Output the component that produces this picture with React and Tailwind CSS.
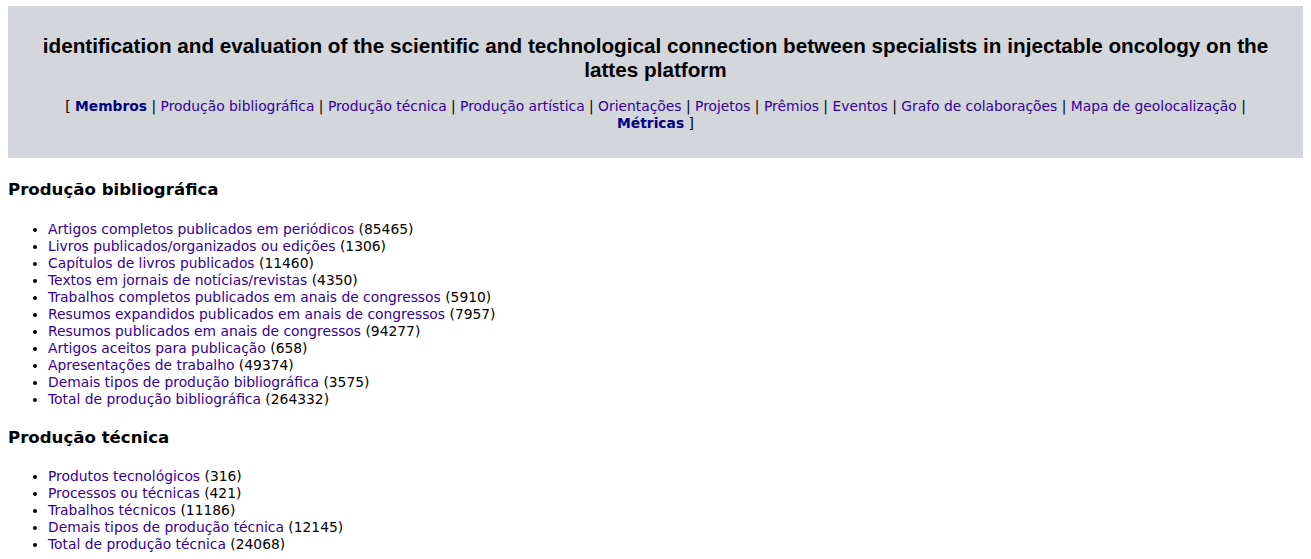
const navItems = [
  { label: 'Membros', bold: true },
  { label: 'Produção bibliográfica' },
  { label: 'Produção técnica' },
  { label: 'Produção artística' },
  { label: 'Orientações' },
  { label: 'Projetos' },
  { label: 'Prêmios' },
  { label: 'Eventos' },
  { label: 'Grafo de colaborações' },
  { label: 'Mapa de geolocalização' },
  { label: 'Métricas', bold: true },
]

const sections = [
  {
    title: 'Produção bibliográfica',
    items: [
      ['Artigos completos publicados em periódicos', 85465],
      ['Livros publicados/organizados ou edições', 1306],
      ['Capítulos de livros publicados', 11460],
      ['Textos em jornais de notícias/revistas', 4350],
      ['Trabalhos completos publicados em anais de congressos', 5910],
      ['Resumos expandidos publicados em anais de congressos', 7957],
      ['Resumos publicados em anais de congressos', 94277],
      ['Artigos aceitos para publicação', 658],
      ['Apresentações de trabalho', 49374],
      ['Demais tipos de produção bibliográfica', 3575],
      ['Total de produção bibliográfica', 264332],
    ],
  },
  {
    title: 'Produção técnica',
    items: [
      ['Produtos tecnológicos', 316],
      ['Processos ou técnicas', 421],
      ['Trabalhos técnicos', 11186],
      ['Demais tipos de produção técnica', 12145],
      ['Total de produção técnica', 24068],
    ],
  },
]

export default function App() {
  return (
    <div className="min-h-screen bg-white text-black font-['DejaVu_Sans',sans-serif]">
      {/* Header */}
      <div className="mx-2 mt-[6px] bg-[#d3d6db] px-8 pt-[28px] pb-[26px] text-center">
        <h1 className="font-['Liberation_Sans',Arial,sans-serif] text-[20.7px] font-bold leading-[24px]">
          identification and evaluation of the scientific and technological connection between specialists in injectable oncology on the lattes platform
        </h1>
        <p className="mt-[16px] text-[13.85px] leading-[17px]">
          [{' '}
          {navItems.map((n, i) => (
            <span key={n.label}>
              <a
                href="#"
                className={n.bold ? 'font-bold text-[#000080]' : 'text-[#330099]'}
              >
                {n.label}
              </a>
              {i < navItems.length - 1 ? ' | ' : ' '}
            </span>
          ))}
          ]
        </p>
      </div>

      {/* Sections */}
      <div className="px-2">
        {sections.map((s, idx) => (
          <div key={s.title}>
            <h2 className={`${idx === 0 ? 'mt-[21px]' : 'mt-[19px]'} text-[16.6px] font-bold leading-[22px]`}>
              {s.title}
            </h2>
            <ul className={`${idx === 0 ? 'mt-[20px]' : 'mt-[19px]'} list-disc pl-10 text-[13.85px] leading-[17px]`}>
              {s.items.map(([label, count]) => (
                <li key={label}>
                  <a href="#" className="text-[#330099]">{label}</a> ({count})
                </li>
              ))}
            </ul>
          </div>
        ))}
      </div>
    </div>
  )
}
